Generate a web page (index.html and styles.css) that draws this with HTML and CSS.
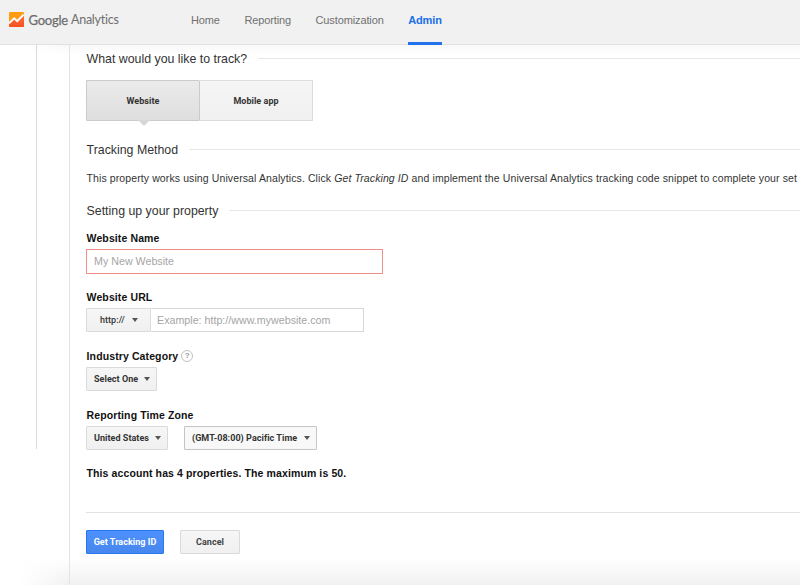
FILE: index.html
```
<!DOCTYPE html>
<html lang="en">
<head>
<meta charset="utf-8">
<title>Google Analytics</title>
<link rel="stylesheet" href="styles.css">
</head>
<body>
<header class="topbar">
  <div class="brand">
    <svg class="logo" width="15" height="15" viewBox="0 0 15 15">
      <defs><linearGradient id="g" x1="0" y1="0" x2="0" y2="1"><stop offset="0" stop-color="#ff7043"/><stop offset="1" stop-color="#f4511e"/></linearGradient></defs>
      <rect width="15" height="15" rx="1" fill="#ff9d12"/>
      <path d="M0 12 L5 7 L8 10 L15 3 V14 Q15 15 14 15 H1 Q0 15 0 14Z" fill="url(#g)"/>
      <path d="M0 11.3 L5.2 6.3 L8.2 9.2 L14.6 2.7" fill="none" stroke="#fff" stroke-width="2"/>
    </svg>
    <span class="google">Google</span><span class="analytics">Analytics</span>
  </div>
  <nav class="nav">
    <a>Home</a><a>Reporting</a><a>Customization</a><a class="active">Admin</a>
  </nav>
</header>
<div class="page">
  <aside class="rail"></aside>
  <main class="content">
    <h2 class="heading">What would you like to track?</h2>
    <div class="tabs"><button class="tab selected">Website</button><button class="tab">Mobile app</button></div>
    <h2 class="heading method">Tracking Method</h2>
    <p class="intro">This property works using Universal Analytics. Click <em>Get Tracking ID</em> and implement the Universal Analytics tracking code snippet to complete your set</p>
    <h2 class="heading setup">Setting up your property</h2>
    <section class="field">
      <label class="label">Website Name</label>
      <div class="input name">My New Website</div>
    </section>
    <section class="field">
      <label class="label">Website URL</label>
      <div class="row"><button class="select scheme">http://<i class="caret"></i></button><div class="input url">Example: http://www.mywebsite.com</div></div>
    </section>
    <section class="field">
      <label class="label">Industry Category<span class="help">?</span></label>
      <div class="row"><button class="select one">Select One<i class="caret"></i></button></div>
    </section>
    <section class="field last">
      <label class="label">Reporting Time Zone</label>
      <div class="row"><button class="select country">United States<i class="caret"></i></button><button class="select zone">(GMT-08:00) Pacific Time<i class="caret"></i></button></div>
    </section>
    <p class="note">This account has 4 properties. The maximum is 50.</p>
    <div class="actions"><button class="btn primary">Get Tracking ID</button><button class="btn">Cancel</button></div>
  </main>
</div>
</body>
</html>
```
FILE: styles.css
```
* { box-sizing: border-box; }
body {
  margin: 0;
  height: 585px;
  overflow: hidden;
  background: #fff;
  color: #333;
  font-family: "Liberation Sans", Arial, sans-serif;
}
button { font-family: Roboto, sans-serif; letter-spacing: 0.04px; padding: 0; margin: 0; }
.topbar {
  display: flex;
  height: 45px;
  background: #f1f1f1;
  border-bottom: 1px solid #e2e2e2;
}
.brand {
  display: flex;
  align-items: center;
  width: 191px;
  height: 39px;
  padding-left: 9px;
  color: #6e6e6e;
  font-family: Lato, sans-serif;
  font-size: 12.5px;
  white-space: nowrap;
}
.logo { margin-right: 4.5px; flex: none; }
.google { width: 42.5px; font-size: 13px; letter-spacing: -0.25px; -webkit-text-stroke: 0.25px #6e6e6e; }
.analytics { letter-spacing: -0.25px; }
.nav { display: flex; gap: 24.5px; height: 45px; }
.nav a {
  height: 45px;
  padding-top: 1px;
  color: #707070;
  font-size: 11px;
  line-height: 39px;
  letter-spacing: -0.12px;
  white-space: nowrap;
}
.nav .active { color: #1a6fe8; font-weight: bold; border-bottom: 3px solid #2374ec; }
.page { display: flex; height: 540px; background: linear-gradient(#f8f8f8, #fff 9px, #fff 512px, #f1f1f1); }
.rail { width: 69px; background: linear-gradient(to right, #fff 20px, transparent); }
.rail::before {
  content: "";
  display: block;
  width: 36px;
  height: 404px;
  border-right: 1px solid #d9d9d9;
}
.content { flex: 1; min-width: 0; padding-left: 16px; border-left: 1px solid #e3e3e3; }
.heading {
  display: flex;
  align-items: center;
  gap: 11px;
  height: 27px;
  margin: 0;
  padding-left: 0.6px;
  color: #333;
  font-size: 12.35px;
  font-weight: normal;
  white-space: nowrap;
}
.heading::after { content: ""; flex: 1; height: 1px; background: #e6e6e6; }
.tabs { display: flex; height: 41px; margin-top: 8px; }
.tab {
  position: relative;
  width: 113px;
  border: 1px solid #dcdcdc;
  border-left: 0;
  border-radius: 0 1px 1px 0;
  background: linear-gradient(#f5f5f5, #f0f0f0);
  color: #333;
  font-size: 9px;
  font-weight: bold;
}
.tab.selected { width: 114px; border: 1px solid #cbcbcb; background: linear-gradient(#ebebeb, #dedede); }
.tab.selected::after {
  content: "";
  position: absolute;
  top: 39px;
  left: 51px;
  border: 6px solid transparent;
  border-top-color: #d6d6d6;
  border-bottom: 0;
}
.method { margin-top: 15px; }
.intro {
  height: 20px;
  margin: 5px 0 0;
  padding-left: 0.5px;
  font-size: 10.5px;
  line-height: 20px;
  letter-spacing: 0.105px;
  white-space: nowrap;
}
.setup { margin-top: 9px; }
.field { height: 59px; }
.field.last { height: 48px; }
.label {
  display: flex;
  align-items: center;
  height: 25px;
  padding: 2px 0 0 0.6px;
  color: #111;
  font-size: 10.5px;
  font-weight: bold;
  letter-spacing: 0.11px;
}
.input {
  height: 24px;
  padding-left: 7px;
  border: 1px solid #d8d8d8;
  background: #fff;
  color: #a5a5a5;
  font-size: 10.7px;
  line-height: 23px;
  white-space: nowrap;
}
.input.name { width: 297px; height: 25px; border-color: #ef8f8b; }
.input.url { width: 214px; border-left: 0; }
.row { display: flex; height: 24px; }
.select {
  display: flex;
  align-items: center;
  justify-content: space-between;
  height: 24px;
  padding: 0 6px 0 7px;
  border: 1px solid #dadada;
  border-radius: 1px;
  background: linear-gradient(#f6f6f6, #f0f0f0);
  color: #333;
  font-size: 9px;
  font-weight: bold;
  white-space: nowrap;
}
.scheme { width: 65px; padding: 0 12px 0 13px; font-weight: 500; }
.scheme + .url { width: 213px; padding-left: 6px; }
.one { width: 71px; }
.country { width: 82px; margin-right: 16px; }
.zone { width: 133px; border-color: #c5c5c5; background: #f8f8f8; }
.caret { border: 0 solid transparent; border-width: 4px 3px 0; border-top-color: #555; }
.help {
  width: 12px;
  height: 12px;
  margin-left: 3px;
  border: 1px solid #c0c0c0;
  border-radius: 50%;
  color: #999;
  font-size: 8px;
  line-height: 10px;
  text-align: center;
}
.note {
  height: 64px;
  margin: 0 0 17px;
  padding: 2px 0 0 0.5px;
  border-bottom: 1px solid #e2e2e2;
  color: #111;
  font-size: 10.5px;
  font-weight: bold;
  line-height: 44px;
  letter-spacing: 0.11px;
}
.actions { display: flex; gap: 16px; }
.btn {
  width: 60px;
  height: 24px;
  border: 1px solid #dadada;
  border-radius: 1px;
  background: linear-gradient(#f6f6f6, #f0f0f0);
  color: #444;
  font-size: 9px;
  font-weight: bold;
}
.btn.primary { width: 78px; border-color: #2578ef; background: linear-gradient(#4d90fe, #4787ed); color: #fff; }
```
